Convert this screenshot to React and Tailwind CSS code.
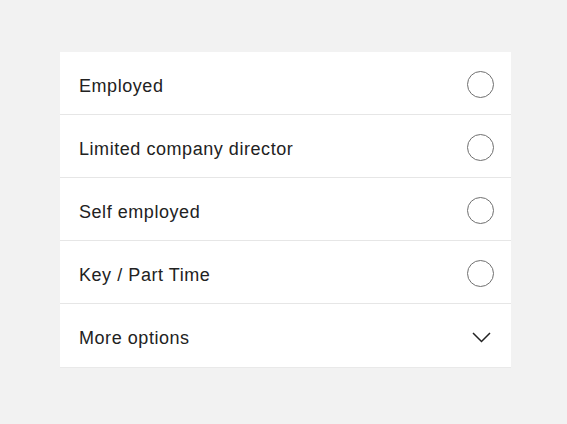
const options = ["Employed", "Limited company director", "Self employed", "Key / Part Time"];

const Radio = () => (
  <span className="block mt-[2px] w-[27px] h-[27px] rounded-full border-[1.5px] border-[#6f6f6f]" />
);

const App = () => {
  return (
    <div className="min-h-[424px] bg-[#f2f2f2] pt-[52px] pl-[60px] font-['Liberation_Sans',Arial,sans-serif]">
      <div className="w-[451px] bg-white">
        {options.map((label) => (
          <div
            key={label}
            className="h-[63px] flex items-center justify-between pl-[19px] pr-[17px] border-b border-[#e6e6e6]"
          >
            <span className="pt-[6px] text-[18px] tracking-[0.55px] text-[#222]">{label}</span>
            <Radio />
          </div>
        ))}
        <div className="h-[64px] flex items-center justify-between pl-[19px] pr-[20px] border-b border-[#e9e9e9]">
          <span className="pt-[6px] text-[18px] tracking-[0.55px] text-[#222]">More options</span>
          <svg className="mt-[3px]" width="19" height="11" viewBox="0 0 19 11" fill="none">
            <path d="M1 1l8.5 8.5L18 1" stroke="#222" strokeWidth="1.5" />
          </svg>
        </div>
      </div>
    </div>
  );
};

export default App;
